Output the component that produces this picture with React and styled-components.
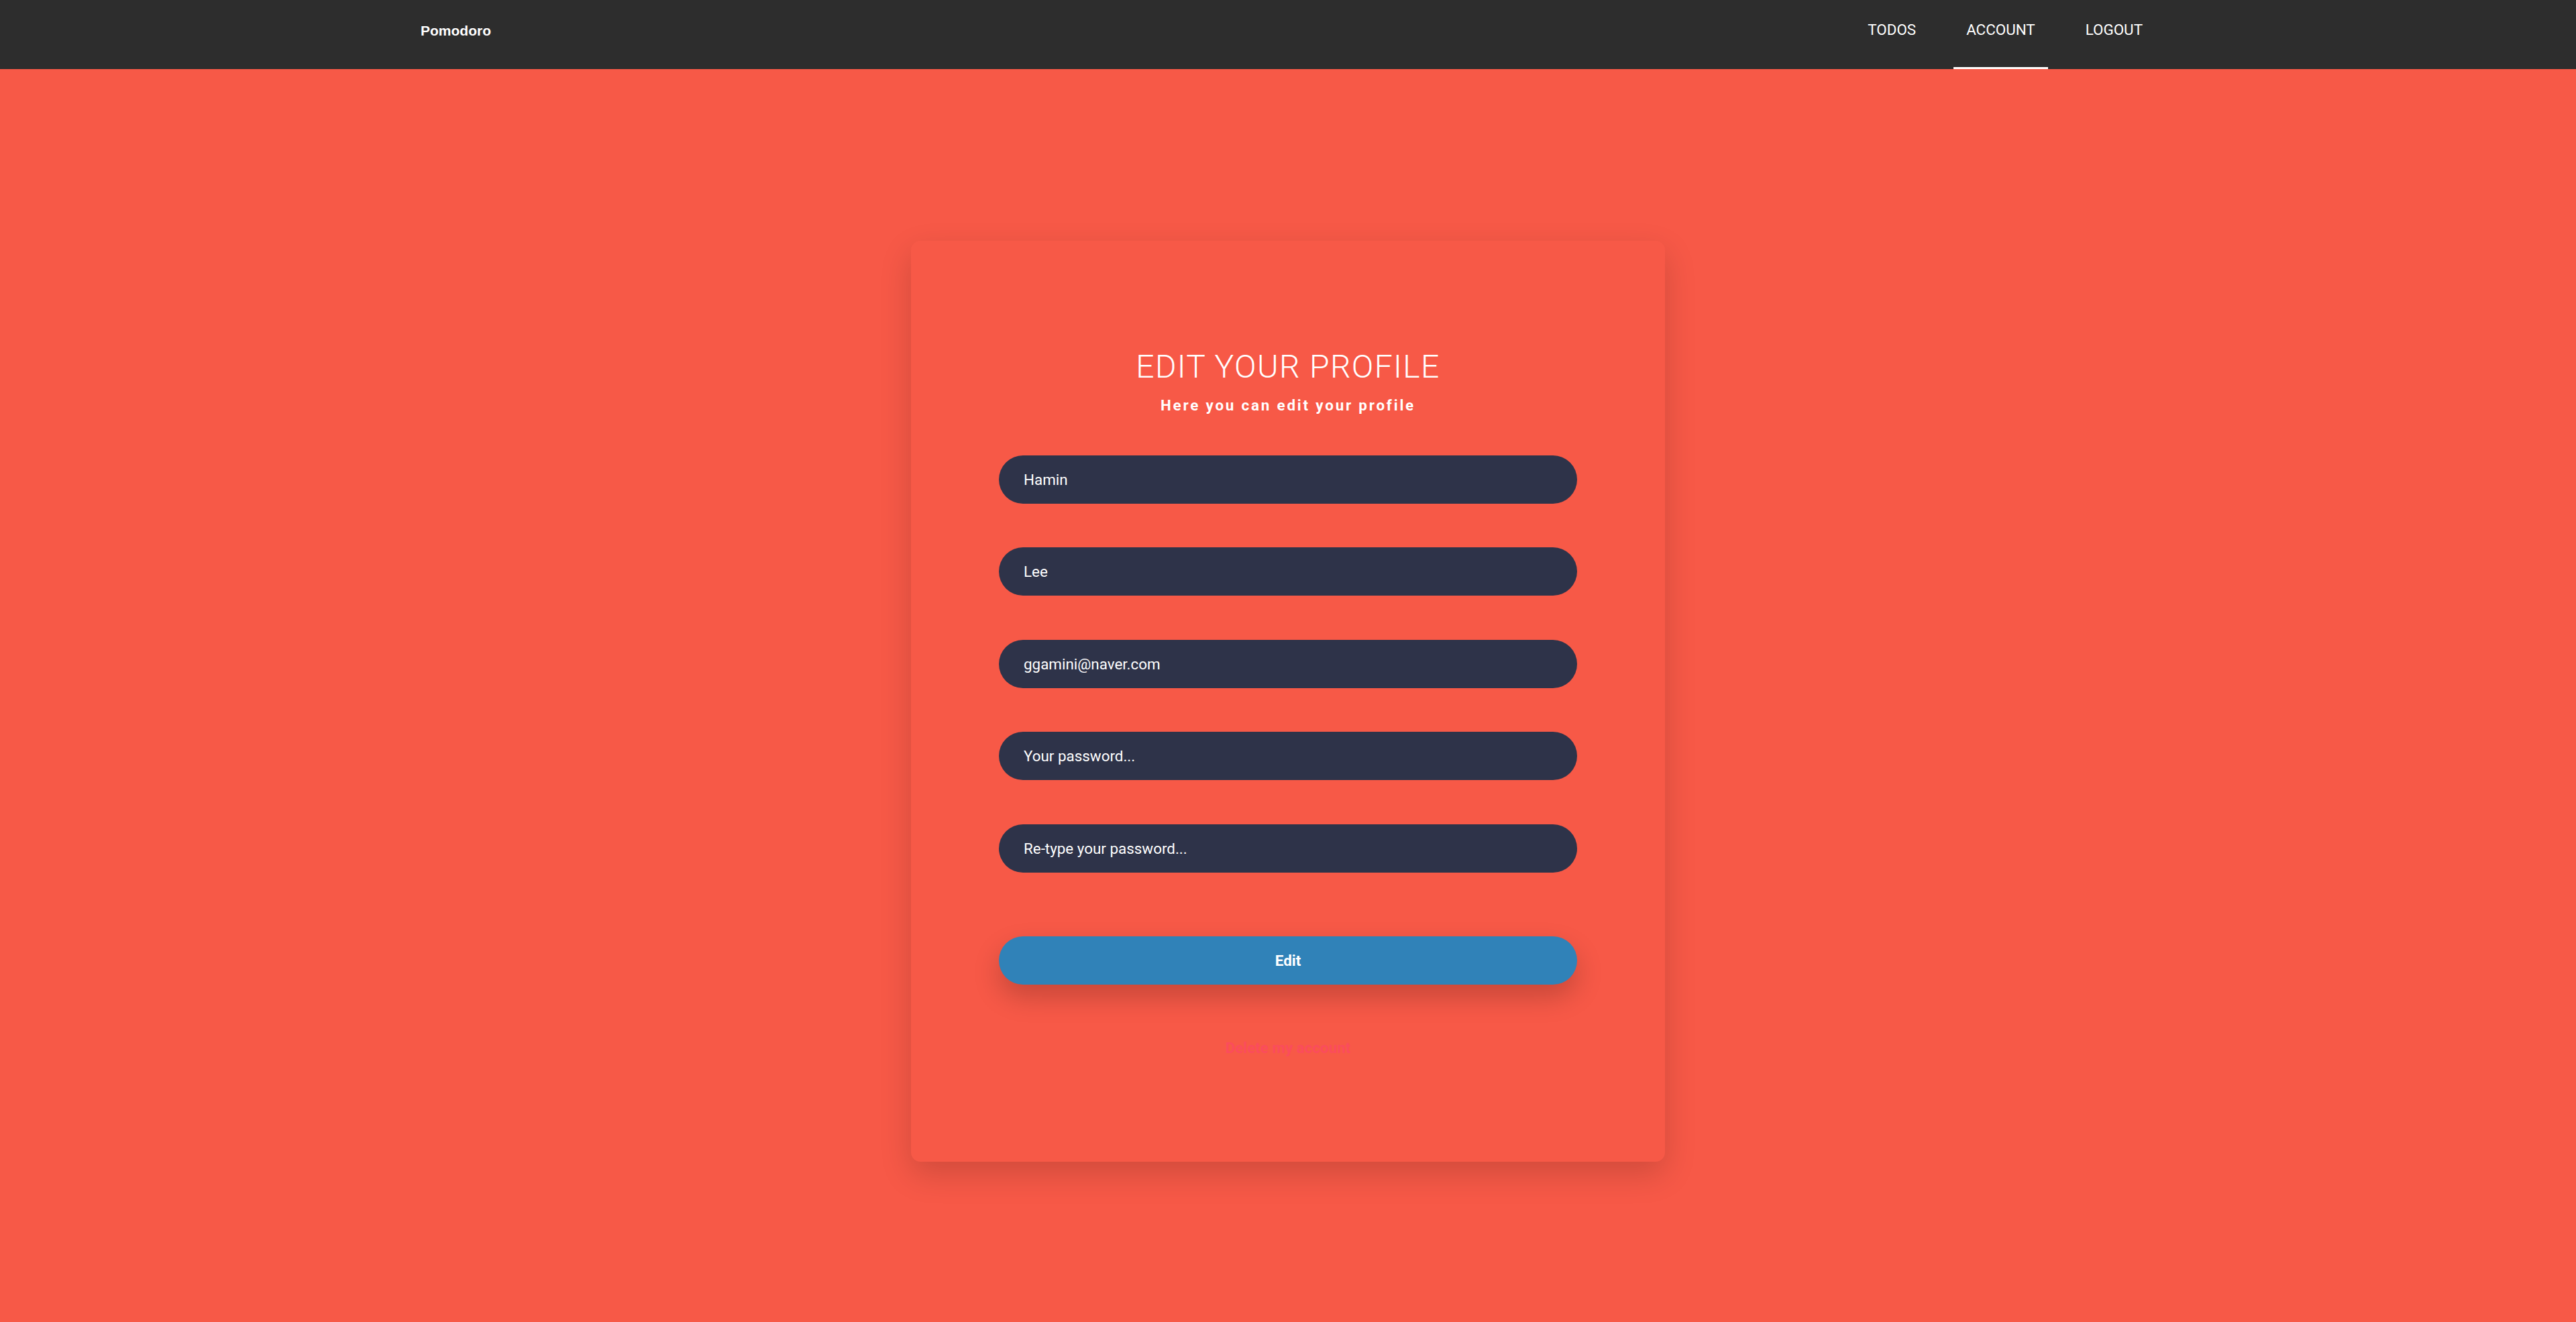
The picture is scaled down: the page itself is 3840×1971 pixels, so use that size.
import React, { useState } from "react";
import styled, { createGlobalStyle } from "styled-components";

const GlobalStyle = createGlobalStyle`
  html, body {
    margin: 0;
    padding: 0;
    background: #f75947;
    font-family: Roboto, "Liberation Sans", sans-serif;
  }
  * {
    box-sizing: border-box;
  }
`;

const Page = styled.div`
  min-height: 100vh;
  background: #f75947;
`;

const Navbar = styled.nav`
  height: 103px;
  background: #2d2d2d;
`;

const NavInner = styled.div`
  width: 2586px;
  height: 100%;
  margin: 0 auto;
  display: flex;
  justify-content: space-between;
  align-items: flex-start;
`;

const Brand = styled.a`
  font-family: "Liberation Sans", Arial, sans-serif;
  font-weight: 700;
  font-size: 21px;
  line-height: 92px;
  color: #fff;
  text-decoration: none;
`;

const NavLinks = styled.ul`
  display: flex;
  gap: 37px;
  margin: 0;
  padding: 0;
  list-style: none;
  height: 100%;
`;

const NavLink = styled.a`
  display: block;
  height: 103px;
  padding: 0 19px;
  font-size: 22.4px;
  line-height: 88px;
  color: #fff;
  text-decoration: none;
  border-bottom: 3px solid ${(props) => (props.active ? "#fff" : "transparent")};
`;

const Main = styled.main`
  display: flex;
  justify-content: center;
  padding-top: 256px;
`;

const Card = styled.div`
  width: 1124px;
  padding: 164px 131px 157px;
  background: #f75947;
  border-radius: 14px;
  box-shadow: 0 18px 48px rgba(0, 0, 0, 0.16);
  display: flex;
  flex-direction: column;
  align-items: stretch;
  text-align: center;
  color: #fff;
`;

const Title = styled.h1`
  margin: 0;
  font-size: 48px;
  line-height: 48px;
  font-weight: 300;
  letter-spacing: 1.4px;
`;

const Subtitle = styled.p`
  margin: 20px 0 0;
  font-size: 22.4px;
  font-weight: 700;
  letter-spacing: 2.8px;
`;

const Form = styled.form`
  display: flex;
  flex-direction: column;
  gap: 65.6px;
  margin-top: 61.5px;
`;

const Field = styled.input`
  height: 72px;
  width: 100%;
  padding: 0 37px;
  border: none;
  border-radius: 36px;
  background: #2e3349;
  color: #fff;
  font-family: Roboto, sans-serif;
  font-size: 22.4px;
  outline: none;

  &::placeholder {
    color: #fff;
    opacity: 1;
  }
`;

const SubmitButton = styled.button`
  margin-top: 95px;
  height: 72px;
  width: 100%;
  border: none;
  border-radius: 36px;
  background: #3082b8;
  color: #fff;
  font-family: Roboto, sans-serif;
  font-size: 22.4px;
  font-weight: 700;
  cursor: pointer;
  box-shadow: 0 18px 40px rgba(0, 0, 0, 0.2);
`;

const DeleteLink = styled.a`
  margin-top: 81px;
  font-size: 22.4px;
  font-weight: 700;
  color: #fb4c5c;
  text-decoration: none;
  cursor: pointer;
`;

const App = () => {
  const [firstName, setFirstName] = useState("Hamin");
  const [lastName, setLastName] = useState("Lee");
  const [email, setEmail] = useState("ggamini@naver.com");
  const [password, setPassword] = useState("");
  const [password2, setPassword2] = useState("");

  return (
    <>
      <GlobalStyle />
      <Page>
        <Navbar>
          <NavInner>
            <Brand href="#">Pomodoro</Brand>
            <NavLinks>
              <li>
                <NavLink href="#">TODOS</NavLink>
              </li>
              <li>
                <NavLink href="#" active>
                  ACCOUNT
                </NavLink>
              </li>
              <li>
                <NavLink href="#">LOGOUT</NavLink>
              </li>
            </NavLinks>
          </NavInner>
        </Navbar>
        <Main>
          <Card>
            <Title>EDIT YOUR PROFILE</Title>
            <Subtitle>Here you can edit your profile</Subtitle>
            <Form onSubmit={(e) => e.preventDefault()}>
              <Field value={firstName} onChange={(e) => setFirstName(e.target.value)} />
              <Field value={lastName} onChange={(e) => setLastName(e.target.value)} />
              <Field value={email} onChange={(e) => setEmail(e.target.value)} />
              <Field
                type="password"
                placeholder="Your password..."
                value={password}
                onChange={(e) => setPassword(e.target.value)}
              />
              <Field
                type="password"
                placeholder="Re-type your password..."
                value={password2}
                onChange={(e) => setPassword2(e.target.value)}
              />
            </Form>
            <SubmitButton type="button">Edit</SubmitButton>
            <DeleteLink>Delete my account</DeleteLink>
          </Card>
        </Main>
      </Page>
    </>
  );
};

export default App;
